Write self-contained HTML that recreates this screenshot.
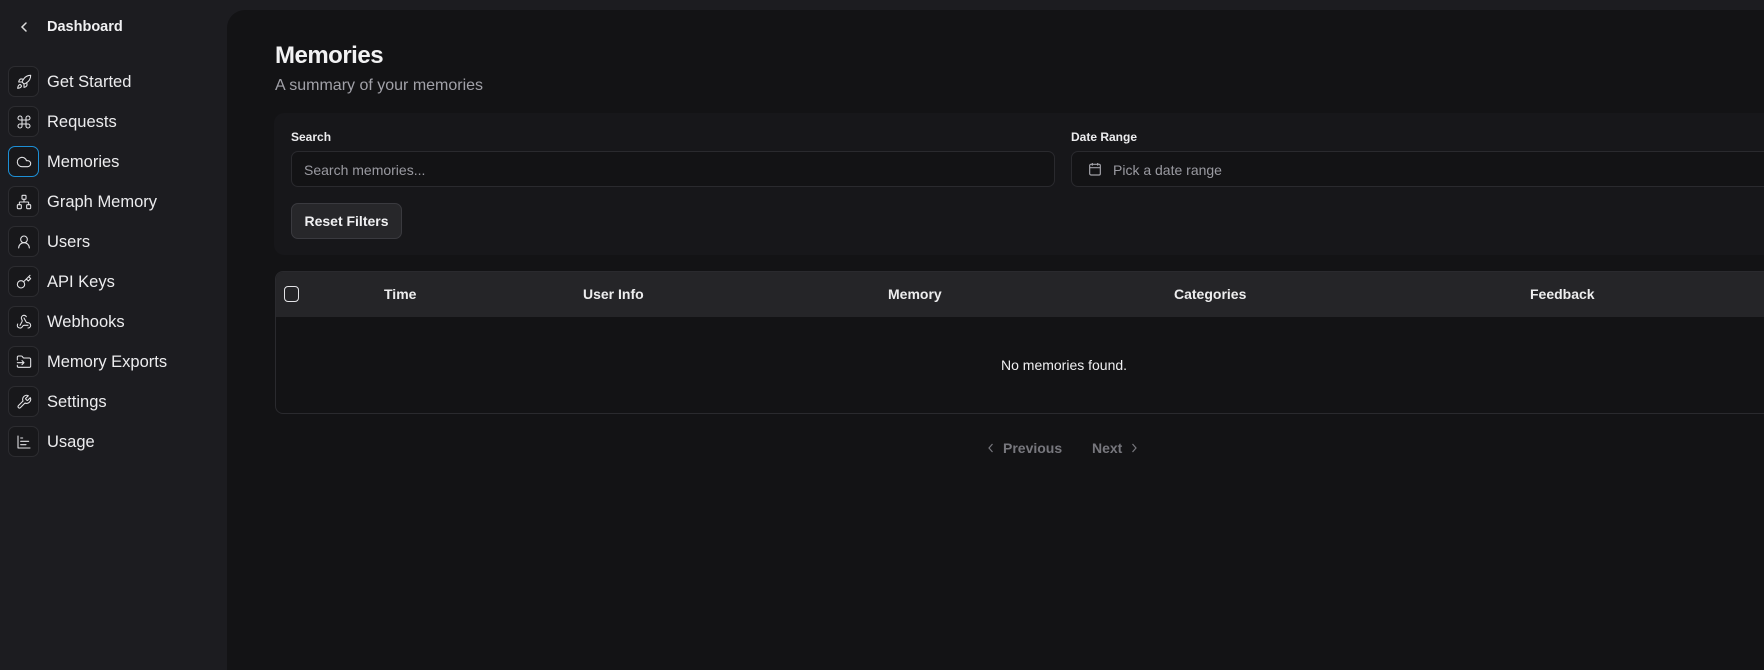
<!DOCTYPE html>
<html><head><meta charset="utf-8"><style>
*{box-sizing:border-box;margin:0;padding:0}
body{width:1764px;height:661px;overflow:hidden;background:#1c1c20;font-family:"Liberation Sans",sans-serif;color:#ececee;position:relative}
.a{position:absolute}
.nav .ib{position:absolute;left:8px;width:31px;height:31px;border:1px solid #2c2c30;border-radius:7px;background:#18181b;display:flex;align-items:center;justify-content:center}
.nav .ib svg{width:16px;height:16px;fill:none;stroke:#e4e4e7;stroke-width:1.6;stroke-linecap:round;stroke-linejoin:round}
.nav .t{position:absolute;left:47px;font-size:16.5px;line-height:20px;color:#ececee}
.main{left:227px;top:10px;width:1540px;height:660px;background:#131315;border-top-left-radius:18px}
.th{position:absolute;top:286px;font-size:14px;font-weight:bold;color:#ededee}
</style></head><body>
<svg class="a" style="left:18px;top:21px" width="12" height="12" viewBox="0 0 12 12"><path d="M8 2 L4 6 L8 10" fill="none" stroke="#ddd" stroke-width="1.5" stroke-linecap="round"/></svg>
<div class="a" style="left:47px;top:19px;font-size:14.5px;font-weight:bold;color:#f0f0f2">Dashboard</div>
<div class="nav">
<div class="ib" style="top:66px"><svg viewBox="0 0 24 24"><path d="M4.5 16.5c-1.5 1.3-2 5-2 5s3.7-.5 5-2c.7-.8.7-2.1-.1-2.9a2.2 2.2 0 0 0-2.9-.1z"/><path d="M12 15l-3-3a22 22 0 0 1 2-3.9A12.9 12.9 0 0 1 22 2c0 2.7-.8 7.5-6 11a22 22 0 0 1-4 2z"/><path d="M9 12H4s.6-3 2-4c1.6-1.1 5 0 5 0M12 15v5s3-.6 4-2c1.1-1.6 0-5 0-5"/></svg></div><div class="t" style="top:72px">Get Started</div>
<div class="ib" style="top:106px"><svg viewBox="0 0 24 24"><path d="M15 6v12a3 3 0 1 0 3-3H6a3 3 0 1 0 3 3V6a3 3 0 1 0-3 3h12a3 3 0 1 0-3-3"/></svg></div><div class="t" style="top:112px">Requests</div>
<div class="ib" style="top:146px;border-color:#1d8fd6"><svg viewBox="0 0 24 24"><path d="M17.5 19H9a7 7 0 1 1 6.7-9h1.8a4.5 4.5 0 1 1 0 9z"/></svg></div><div class="t" style="top:152px">Memories</div>
<div class="ib" style="top:186px"><svg viewBox="0 0 24 24"><rect x="16" y="16" width="6" height="6" rx="1"/><rect x="2" y="16" width="6" height="6" rx="1"/><rect x="9" y="2" width="6" height="6" rx="1"/><path d="M5 16v-3a1 1 0 0 1 1-1h12a1 1 0 0 1 1 1v3M12 12V8"/></svg></div><div class="t" style="top:192px">Graph Memory</div>
<div class="ib" style="top:226px"><svg viewBox="0 0 24 24"><circle cx="12" cy="8" r="5"/><path d="M20 21a8 8 0 0 0-16 0"/></svg></div><div class="t" style="top:232px">Users</div>
<div class="ib" style="top:266px"><svg viewBox="0 0 24 24"><circle cx="7.5" cy="15.5" r="5.5"/><path d="M21 2l-9.6 9.6M15.5 7.5l3 3L22 7l-3-3"/></svg></div><div class="t" style="top:272px">API Keys</div>
<div class="ib" style="top:306px"><svg viewBox="0 0 24 24"><path d="M18 16.98h-5.99c-1.1 0-1.95.94-2.48 1.9A4 4 0 0 1 2 17c.01-.7.2-1.4.57-2"/><path d="M6 17l3.13-5.78c.53-.97.1-2.18-.5-3.1a4 4 0 1 1 6.890-4.06"/><path d="M12 6l3.13 5.73C15.66 12.7 16.9 13 18 13a4 4 0 0 1 0 8"/></svg></div><div class="t" style="top:312px">Webhooks</div>
<div class="ib" style="top:346px"><svg viewBox="0 0 24 24"><path d="M2 9V5a2 2 0 0 1 2-2h3.9a2 2 0 0 1 1.7.9l.8 1.2a2 2 0 0 0 1.7.9H20a2 2 0 0 1 2 2v10a2 2 0 0 1-2 2H4a2 2 0 0 1-2-2v-1"/><path d="M2 13h10M9 16l3-3-3-3"/></svg></div><div class="t" style="top:352px">Memory Exports</div>
<div class="ib" style="top:386px"><svg viewBox="0 0 24 24"><path d="M14.7 6.3a1 1 0 0 0 0 1.4l1.6 1.6a1 1 0 0 0 1.4 0l3.77-3.77a6 6 0 0 1-7.94 7.94l-6.91 6.91a2.12 2.12 0 0 1-3-3l6.910-6.91a6 6 0 0 1 7.94-7.94z"/></svg></div><div class="t" style="top:392px">Settings</div>
<div class="ib" style="top:426px"><svg viewBox="0 0 24 24"><path d="M3 3v18h18M7 16h8M7 11h12M7 6h3"/></svg></div><div class="t" style="top:432px">Usage</div>
</div>
<div class="a main"></div>
<div class="a" style="left:275px;top:42px;font-size:24px;font-weight:bold;color:#f2f2f3;letter-spacing:-0.5px">Memories</div>
<div class="a" style="left:275px;top:77px;font-size:16px;color:#a1a1a8">A summary of your memories</div>
<div class="a" style="left:274px;top:113px;width:1500px;height:142px;background:#17171a;border-radius:10px"></div>
<div class="a" style="left:291px;top:130px;font-size:12px;font-weight:bold;color:#ececee">Search</div>
<div class="a" style="left:291px;top:151px;width:764px;height:36px;border:1px solid #2a2a2e;border-radius:7px;background:#131315;font-size:14px;color:#9a9aa1;padding:10px 0 0 12px">Search memories...</div>
<div class="a" style="left:1071px;top:130px;font-size:12px;font-weight:bold;color:#ececee">Date Range</div>
<div class="a" style="left:1071px;top:151px;width:720px;height:36px;border:1px solid #2a2a2e;border-radius:7px;background:#131315;font-size:14px;color:#9a9aa1;padding:10px 0 0 41px">Pick a date range</div>
<svg class="a" style="left:1087px;top:161px" width="16" height="16" viewBox="0 0 24 24" fill="none" stroke="#a1a1a8" stroke-width="1.8"><rect x="4" y="5" width="16" height="16" rx="2"/><path d="M8 3v4M16 3v4M4 10h16"/></svg>
<div class="a" style="left:291px;top:203px;width:111px;height:36px;border:1px solid #3a3a3f;border-radius:7px;background:#27272a;font-size:14px;font-weight:bold;color:#f0f0f2;text-align:center;line-height:34px">Reset Filters</div>
<div class="a" style="left:275px;top:271px;width:1500px;height:143px;border:1px solid #2a2a2e;border-radius:8px;overflow:hidden">
<div style="height:45px;background:#252528"></div></div>
<div class="a" style="left:284px;top:286px;width:15px;height:16px;border:1.5px solid #e4e4e7;border-radius:4px"></div>
<div class="th" style="left:384px">Time</div>
<div class="th" style="left:583px">User Info</div>
<div class="th" style="left:888px">Memory</div>
<div class="th" style="left:1174px">Categories</div>
<div class="th" style="left:1530px">Feedback</div>
<div class="a" style="left:1001px;top:357px;font-size:14px;color:#f0f0f2">No memories found.</div>
<svg class="a" style="left:986px;top:442px" width="10" height="12" viewBox="0 0 10 12"><path d="M6.5 2 L3 6 L6.5 10" fill="none" stroke="#77777d" stroke-width="1.2"/></svg>
<div class="a" style="left:1003px;top:440px;font-size:14px;font-weight:bold;color:#77777d">Previous</div>
<div class="a" style="left:1092px;top:440px;font-size:14px;font-weight:bold;color:#77777d">Next</div>
<svg class="a" style="left:1129px;top:442px" width="10" height="12" viewBox="0 0 10 12"><path d="M3.5 2 L7 6 L3.5 10" fill="none" stroke="#77777d" stroke-width="1.2"/></svg>
</body></html>
